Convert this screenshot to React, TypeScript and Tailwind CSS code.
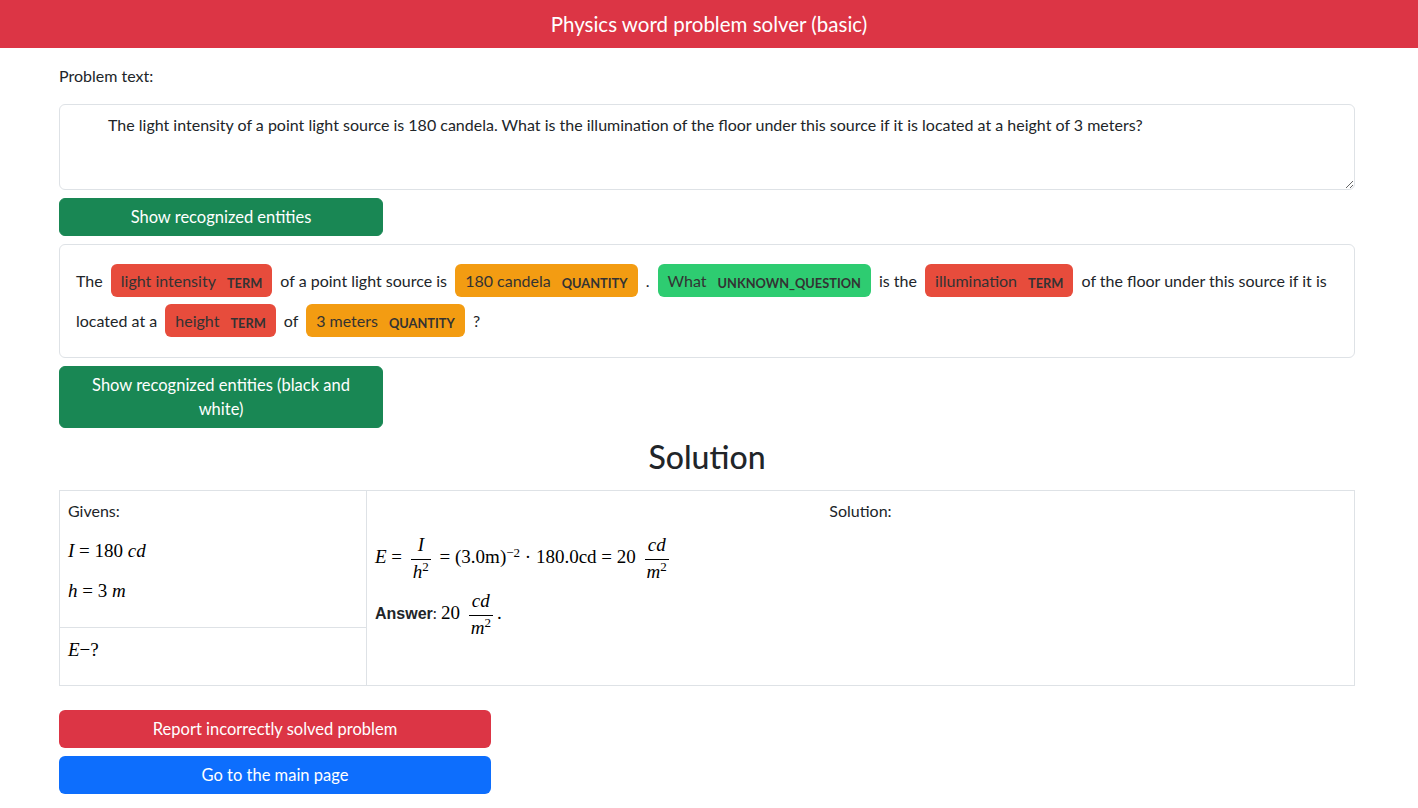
import type { ReactNode } from "react";

type Entity = { text: string; label: string; tone: "term" | "qty" | "q" };

const tones = {
    term: "bg-[#e74c3c]",
    qty: "bg-[#f39c12]",
    q: "bg-[#2ecc71]",
};

const parts: (string | Entity)[] = [
    "The",
    { text: "light intensity", label: "TERM", tone: "term" },
    "of a point light source is",
    { text: "180 candela", label: "QUANTITY", tone: "qty" },
    ".",
    { text: "What", label: "UNKNOWN_QUESTION", tone: "q" },
    "is the",
    { text: "illumination", label: "TERM", tone: "term" },
    "of the floor under this source if it is located at a",
    { text: "height", label: "TERM", tone: "term" },
    "of",
    { text: "3 meters", label: "QUANTITY", tone: "qty" },
    "?",
];

function Mark({ e }: { e: Entity }) {
    return (
        <mark
            className={`${tones[e.tone]} mx-[4px] rounded-[6px] px-[10px] py-[7px] leading-none text-[#333]`}
        >
            {e.text}
            <span className="ml-[11px] align-middle text-[12.8px] font-bold uppercase leading-none text-[#333]">
                {e.label}
            </span>
        </mark>
    );
}

function I({ children }: { children: ReactNode }) {
    return <span className="italic">{children}</span>;
}

function Frac({ n, d }: { n: ReactNode; d: ReactNode }) {
    return (
        <span className="mx-[4px] inline-flex flex-col items-center align-middle leading-[1.1]">
            <span className="px-[2px] pb-[3px]">{n}</span>
            <span className="w-full border-t border-[#000]" />
            <span className="px-[2px] pt-[2px]">{d}</span>
        </span>
    );
}

function Math({ children }: { children: ReactNode }) {
    return (
        <span className="font-['Liberation_Serif','DejaVu_Serif',serif] text-[19px] text-black">
            {children}
        </span>
    );
}

export default function App() {
    return (
        <div className="min-h-[808px] bg-white font-['Lato',sans-serif] text-[16px] text-[#212529]">
            <header className="flex h-[48px] items-center justify-center bg-[#dc3545] text-[20.5px] text-white">
                Physics word problem solver (basic)
            </header>

            <main className="ml-[59px] w-[1296px] pb-4">
                <p className="mt-[16px] leading-[24px]">Problem text:</p>

                <textarea
                    className="mt-[16px] block h-[86px] w-full resize-y rounded-[6px] border border-[#dee2e6] px-[12px] py-[8px] indent-[36px] text-[16px] leading-[24px] text-[#212529] outline-none"
                    defaultValue="The light intensity of a point light source is 180 candela. What is the illumination of the floor under this source if it is located at a height of 3 meters?"
                />

                <button className="mt-[8px] h-[38px] w-[324px] rounded-[6px] border border-[#198754] bg-[#198754] text-[16.5px] text-white">
                    Show recognized entities
                </button>

                <div className="mt-[8px] rounded-[6px] border border-[#dee2e6] p-[16px] leading-[40px]">
                    {parts.map((p, i) =>
                        typeof p === "string" ? (
                            <span key={i}> {p} </span>
                        ) : (
                            <Mark key={i} e={p} />
                        )
                    )}
                </div>

                <button className="mt-[8px] w-[324px] rounded-[6px] border border-[#198754] bg-[#198754] px-[12px] py-[6px] text-[16.5px] leading-[24px] text-white">
                    Show recognized entities (black and white)
                </button>

                <h2 className="mt-[10px] text-center text-[32px] font-medium leading-[38px] text-[#212529]">
                    Solution
                </h2>

                <table className="mt-[14px] w-full border-collapse border border-[#dee2e6]">
                    <tbody>
                        <tr>
                            <td className="w-[307px] border border-[#dee2e6] p-[8px] align-top">
                                <p className="leading-[24px]">Givens:</p>
                                <p className="mt-[16px] leading-[24px]">
                                    <Math>
                                        <I>I</I> = 180 <I>cd</I>
                                    </Math>
                                </p>
                                <p className="mb-[16px] mt-[16px] leading-[24px]">
                                    <Math>
                                        <I>h</I> = 3 <I>m</I>
                                    </Math>
                                </p>
                            </td>
                            <td rowSpan={2} className="border border-[#dee2e6] p-[8px] align-top">
                                <p className="text-center leading-[24px]">Solution:</p>
                                <p className="mt-[12px]">
                                    <Math>
                                        <I>E</I> ={" "}
                                        <Frac n={<I>I</I>} d={<><I>h</I><sup className="text-[13px]">2</sup></>} />{" "}
                                        = (3.0m)<sup className="text-[13px]">−2</sup> · 180.0cd = 20{" "}
                                        <Frac n={<I>cd</I>} d={<><I>m</I><sup className="text-[13px]">2</sup></>} />
                                    </Math>
                                </p>
                                <p className="mt-[8px]">
                                    <span className="font-['Liberation_Sans',sans-serif] font-bold">Answer</span>:{" "}
                                    <Math>
                                        20{" "}
                                        <Frac n={<I>cd</I>} d={<><I>m</I><sup className="text-[13px]">2</sup></>} />
                                        .
                                    </Math>
                                </p>
                            </td>
                        </tr>
                        <tr>
                            <td className="h-[58px] border border-[#dee2e6] p-[8px] align-top">
                                <Math>
                                    <I>E</I>−?
                                </Math>
                            </td>
                        </tr>
                    </tbody>
                </table>

                <button className="mt-[24px] block h-[38px] w-[432px] rounded-[6px] bg-[#dc3545] text-[16.5px] text-white">
                    Report incorrectly solved problem
                </button>
                <button className="mt-[8px] block h-[38px] w-[432px] rounded-[6px] bg-[#0d6efd] text-[16.5px] text-white">
                    Go to the main page
                </button>
            </main>
        </div>
    );
}
